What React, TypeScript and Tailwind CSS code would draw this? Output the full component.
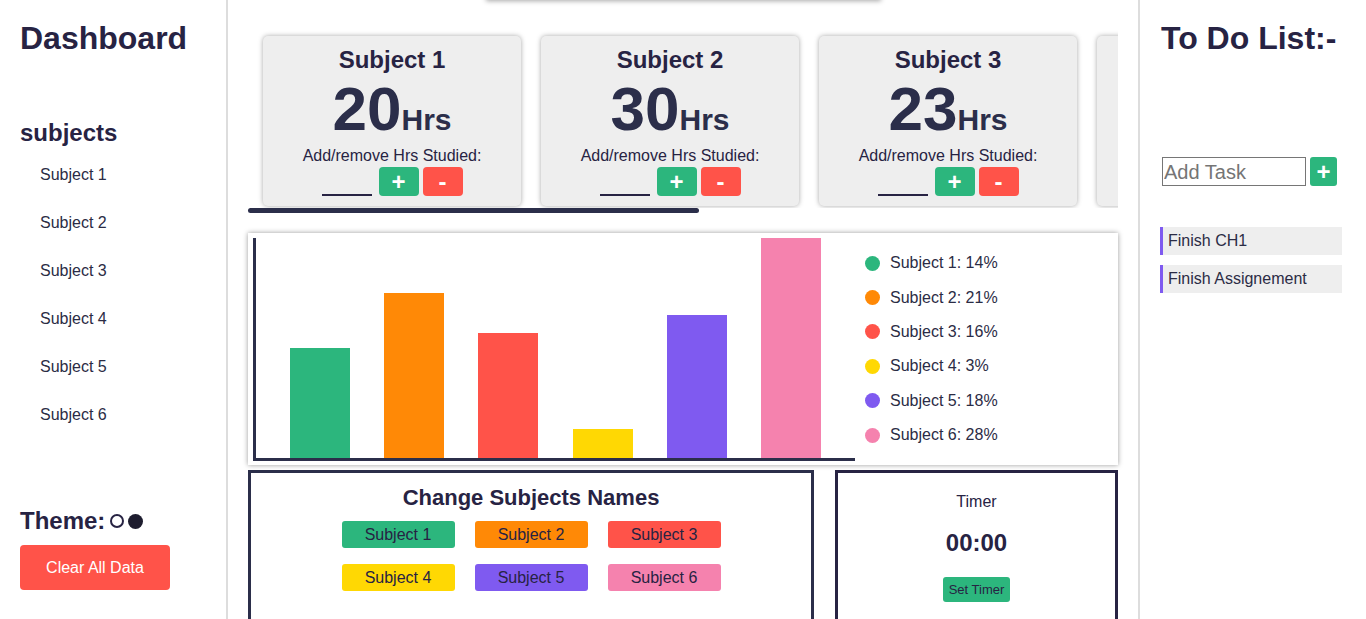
import React from "react";

const subjects = [
  { name: "Subject 1", hrs: 20, pct: 14, color: "bg-[#2cb67d]", h: "h-[110px]" },
  { name: "Subject 2", hrs: 30, pct: 21, color: "bg-[#ff8906]", h: "h-[165px]" },
  { name: "Subject 3", hrs: 23, pct: 16, color: "bg-[#ff5349]", h: "h-[125px]" },
  { name: "Subject 4", hrs: 5, pct: 3, color: "bg-[#ffd803]", h: "h-[29px]" },
  { name: "Subject 5", hrs: 26, pct: 18, color: "bg-[#7f5af0]", h: "h-[143px]" },
  { name: "Subject 6", hrs: 40, pct: 28, color: "bg-[#f582ae]", h: "h-[220px]" },
];

function Sidebar() {
  return (
    <aside className="w-[228px] shrink-0 border-r-2 border-[#dddddd] px-5 min-h-screen">
      <h1 className="mt-[20px] text-[32px] font-bold leading-[36px] text-[#272343]">Dashboard</h1>
      <h2 className="mt-[63px] text-[24px] font-bold leading-[28px] text-[#272343]">subjects</h2>
      <ul className="mt-[4px] pl-5">
        {subjects.map((s) => (
          <li key={s.name} className="h-[48px] leading-[48px] text-[16px] text-[#2b2c45]">
            {s.name}
          </li>
        ))}
      </ul>
      <div className="mt-[68px] flex items-center h-[28px]">
        <span className="text-[24px] font-bold leading-[28px] text-[#272343]">Theme:</span>
        <span className="ml-[5px] w-[14px] h-[14px] rounded-full border-2 border-[#272343] bg-white" />
        <span className="ml-[4px] w-[15px] h-[15px] rounded-full bg-[#1e1d2f]" />
      </div>
      <button className="mt-[10px] w-[150px] h-[45px] rounded-[4px] bg-[#ff5349] text-white text-[16px]">
        Clear All Data
      </button>
    </aside>
  );
}

function SubjectCard({ name, hrs }: { name: string; hrs: number }) {
  return (
    <div className="w-[258px] h-[170px] shrink-0 rounded-[5px] bg-[#eeeeee] shadow-[0_0_5px_rgba(0,0,0,0.35)] flex flex-col items-center pt-[10px] text-[#272343]">
      <div className="text-[24px] font-bold leading-[28px]">{name}</div>
      <div className="mt-[4px] h-[62px] leading-[62px] flex items-baseline text-[#2b2e4a]">
        <span className="text-[62px] font-bold">{hrs}</span>
        <span className="text-[30px] font-bold">Hrs</span>
      </div>
      <div className="mt-[7px] text-[16px] leading-[18px]">Add/remove Hrs Studied:</div>
      <div className="mt-[2px] flex items-end">
        <div className="w-[50px] h-[27px] border-b-2 border-[#272343]" />
        <button className="ml-[7px] w-[40px] h-[29px] rounded-[4px] bg-[#2cb67d] text-white text-[24px] font-bold leading-[29px]">
          +
        </button>
        <button className="ml-[4px] w-[40px] h-[29px] rounded-[4px] bg-[#ff5349] text-white text-[24px] font-bold leading-[29px]">
          -
        </button>
      </div>
    </div>
  );
}

function Chart() {
  return (
    <div className="mt-[20px] h-[232px] bg-white shadow-[0_0_5px_rgba(0,0,0,0.4)] flex">
      <div className="ml-[5px] mt-[5px] w-[602px] h-[223px] border-l-[3px] border-b-[3px] border-[#2b2e4a] flex items-end justify-evenly">
        {subjects.map((s) => (
          <div key={s.name} className={`w-[60px] ${s.h} ${s.color}`} />
        ))}
      </div>
      <ul className="ml-[10px] pt-[13px]">
        {subjects.map((s) => (
          <li key={s.name} className="h-[34.4px] flex items-center text-[16px] text-[#2b2c45]">
            <span className={`w-[15px] h-[15px] rounded-full ${s.color}`} />
            <span className="ml-[10px]">
              {s.name}: {s.pct}%
            </span>
          </li>
        ))}
      </ul>
    </div>
  );
}

function Bottom() {
  return (
    <div className="mt-[5px] flex gap-[21px]">
      <div className="w-[566px] h-[170px] shrink-0 border-[3px] border-[#2b2e4a] flex flex-col items-center">
        <h3 className="mt-[12px] text-[22px] font-bold leading-[26px] text-[#272343]">Change Subjects Names</h3>
        <div className="mt-[10px] grid grid-cols-3 gap-x-[20px] gap-y-[16px]">
          {subjects.map((s) => (
            <button
              key={s.name}
              className={`w-[113px] h-[27px] rounded-[3px] ${s.color} text-[16px] text-[#272343]`}
            >
              {s.name}
            </button>
          ))}
        </div>
      </div>
      <div className="flex-1 h-[170px] border-[3px] border-[#272343] flex flex-col items-center">
        <div className="mt-[19px] text-[16px] leading-[20px] text-[#272343]">Timer</div>
        <div className="mt-[17px] text-[24px] font-bold leading-[28px] text-[#272343]">00:00</div>
        <button className="mt-[20px] w-[67px] h-[25px] rounded-[3px] bg-[#2cb67d] text-[13px] text-[#272343]">
          Set Timer
        </button>
      </div>
    </div>
  );
}

function TodoList() {
  return (
    <aside className="w-[228px] shrink-0 border-l-2 border-[#dddddd] pl-[21px] pr-[24px]">
      <h1 className="mt-[20px] whitespace-nowrap text-[32px] font-bold leading-[36px] text-[#272343]">To Do List:-</h1>
      <div className="mt-[101px] flex items-center pl-[1px]">
        <input
          placeholder="Add Task"
          className="w-[144px] h-[29px] border border-[#767676] px-[1px] text-[20px] text-[#272343] placeholder:text-[#757575] outline-none"
        />
        <button className="ml-[4px] w-[27px] h-[29px] rounded-[3px] bg-[#2cb67d] text-white text-[24px] font-bold leading-[29px]">
          +
        </button>
      </div>
      <ul className="mt-[41px] -ml-[1px] flex flex-col gap-[10px]">
        {["Finish CH1", "Finish Assignement"].map((t) => (
          <li
            key={t}
            className="h-[28px] leading-[28px] border-l-[3px] border-[#7f5af0] bg-[#eeeeee] pl-[5px] text-[16px] text-[#2b2c45]"
          >
            {t}
          </li>
        ))}
      </ul>
    </aside>
  );
}

export default function App() {
  return (
    <div className="flex bg-white h-screen overflow-hidden" style={{ fontFamily: '"Liberation Sans", Arial, sans-serif' }}>
      <Sidebar />
      <main className="flex-1 px-5 min-w-0">
        <div className="mx-auto -mt-[10px] w-[395px] h-[10px] bg-white shadow-[0_1px_5px_rgba(0,0,0,0.35)]" />
        <div className="overflow-hidden pt-[36px] pb-[2px]">
          <div className="flex gap-5 px-[15px]">
            {subjects.map((s) => (
              <SubjectCard key={s.name} name={s.name} hrs={s.hrs} />
            ))}
          </div>
        </div>
        <div className="w-[451px] h-[5px] rounded-full bg-[#2b2e4a]" />
        <Chart />
        <Bottom />
      </main>
      <TodoList />
    </div>
  );
}
